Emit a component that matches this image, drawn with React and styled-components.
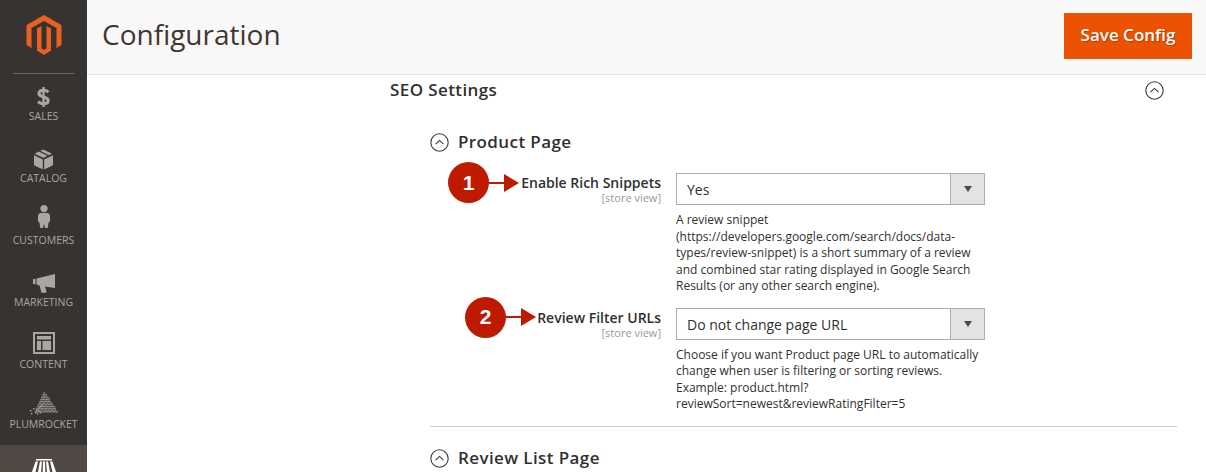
import React from "react";
import styled, { createGlobalStyle } from "styled-components";

const GlobalStyle = createGlobalStyle`
  html, body {
    margin: 0;
    padding: 0;
    background: #fff;
    font-family: "Open Sans", "Liberation Sans", sans-serif;
  }
`;

const Page = styled.div`
  display: flex;
  width: 1206px;
  height: 472px;
  overflow: hidden;
`;

const Sidebar = styled.nav`
  flex: 0 0 87px;
  background: #373330;
  display: flex;
  flex-direction: column;
`;

const LogoBox = styled.div`
  flex: none;
  height: 74px;
  margin: 0 13px 1px;
  padding-top: 15px;
  box-sizing: border-box;
  border-bottom: 1px solid #6d6762;
  display: flex;
  justify-content: center;
  align-items: flex-start;
`;

const NavItem = styled.a`
  flex: 0 0 ${(p) => p.$height}px;
  box-sizing: border-box;
  padding-top: ${(p) => (p.$active ? 14 : 10)}px;
  display: flex;
  flex-direction: column;
  align-items: center;
  color: ${(p) => (p.$active ? "#fff" : "#aaa6a0")};
  background: ${(p) => (p.$active ? "#514943" : "transparent")};
  font-size: 10.5px;
  line-height: 14px;
  text-transform: uppercase;
`;

const NavIcon = styled.span`
  height: ${(p) => (p.$short ? 22 : 24)}px;
  display: flex;
  align-items: ${(p) => (p.$active ? "flex-start" : "center")};
  justify-content: center;
  transform: translateY(${(p) => p.$lift || 0}px);
`;

const Main = styled.main`
  flex: 1;
  display: flex;
  flex-direction: column;
  min-width: 0;
`;

const Header = styled.header`
  height: 75px;
  flex: none;
  box-sizing: border-box;
  background: #f8f8f8;
  border-bottom: 1px solid #e3e3e3;
  display: flex;
  align-items: flex-start;
  justify-content: space-between;
  padding: 13px 14px 0 15px;
`;

const Title = styled.h1`
  margin: -1px 0 0;
  font-size: 28px;
  line-height: 44px;
  font-weight: 400;
  color: #41362f;
`;

const SaveButton = styled.button`
  width: 128px;
  height: 46px;
  border: 0;
  background: #eb5202;
  color: #fff;
  font-family: inherit;
  font-size: 17px;
  font-weight: 600;
  padding: 0 0 4px;
  text-shadow: 1px 1px 1px rgba(0, 0, 0, 0.25);
`;

const Content = styled.div`
  padding: 0 29px 0 303px;
`;

const SectionHead = styled.div`
  height: 30px;
  display: flex;
  align-items: center;
  justify-content: space-between;
  padding-right: 13px;
`;

const SectionTitle = styled.h2`
  margin: -2px 0 0;
  font-size: 17px;
  font-weight: 600;
  letter-spacing: 0.4px;
  color: #303030;
`;

const Group = styled.section`
  margin-left: 40px;
`;

const GroupHead = styled.div`
  display: flex;
  align-items: center;
  gap: 9px;
  height: 26px;
  margin-top: ${(p) => p.$top}px;
`;

const GroupTitle = styled.h3`
  margin: -2px 0 0;
  font-size: 17px;
  font-weight: 600;
  letter-spacing: 0.4px;
  color: #303030;
`;

const Row = styled.div`
  display: grid;
  grid-template-columns: 231px 309px;
  column-gap: 15px;
  margin-top: ${(p) => p.$top}px;
`;

const LabelCell = styled.div`
  position: relative;
  text-align: right;
  padding-top: 1px;
`;

const Label = styled.div`
  font-size: 14px;
  line-height: 18px;
  font-weight: 600;
  color: #303030;
`;

const Scope = styled.div`
  font-size: 11px;
  line-height: 12px;
  color: #999;
`;

const Callout = styled.div`
  position: absolute;
  top: -11px;
  left: ${(p) => p.$left}px;
  display: flex;
  align-items: center;
`;

const Badge = styled.span`
  width: 41px;
  height: 41px;
  border-radius: 50%;
  background: #bd1a00;
  color: #fff;
  font-family: "Liberation Sans", sans-serif;
  font-size: 21px;
  font-weight: 700;
  display: flex;
  align-items: center;
  justify-content: center;
`;

const ArrowLine = styled.span`
  width: 15px;
  height: 2px;
  background: #bd1a00;
`;

const ArrowHead = styled.span`
  width: 0;
  height: 0;
  border-left: 15px solid #bd1a00;
  border-top: 9px solid transparent;
  border-bottom: 9px solid transparent;
`;

const Select = styled.div`
  height: 32px;
  box-sizing: border-box;
  border: 1px solid #adadad;
  display: flex;
  align-items: stretch;
`;

const SelectValue = styled.div`
  flex: 1;
  padding-left: 10px;
  font-size: 14px;
  line-height: 31px;
  color: #303030;
`;

const SelectArrow = styled.div`
  width: 33px;
  background: #e3e3e3;
  border-left: 1px solid #adadad;
  display: flex;
  align-items: center;
  justify-content: center;

  &::after {
    content: "";
    border-left: 4.5px solid transparent;
    border-right: 4.5px solid transparent;
    border-top: 6px solid #514943;
  }
`;

const Note = styled.div`
  margin-top: 7px;
  font-size: 12px;
  line-height: 16.5px;
  color: #303030;
`;

const Rule = styled.hr`
  margin: 13px 0 0;
  border: 0;
  border-top: 1px solid #cccccc;
`;

const CollapseIcon = () => (
  <svg width="19" height="19" viewBox="0 0 19 19" fill="none">
    <circle cx="9.5" cy="9.5" r="8.7" stroke="#41362f" strokeWidth="1.1" />
    <path d="M5.5 11.2 9.5 7.4l4 3.8" stroke="#41362f" strokeWidth="1.1" />
  </svg>
);

const Logo = () => (
  <svg width="36" height="41" viewBox="0 0 36 41" fill="#eb5f20">
    <path d="M18 0 35.5 10v20L30.500 33V13L18 6 5.500 13v20L.5 30V10Z" />
    <path d="M11 13.500 15.500 11v22.500L18 35l2.500-1.500V11L25 13.500V35.500L18 40 11 35.500Z" />
  </svg>
);

const DollarIcon = () => (
  <svg width="13" height="20" viewBox="0 0 14 22" fill="none" stroke="#aaa6a0">
    <path d="M7 0v22" strokeWidth="2.600" />
    <path d="M12.300 5.700C11 4.200 9 3.600 7 3.600c-3 0-5 1.300-5 3.500 0 5 10.200 2.700 10.200 7.800 0 2.300-2.200 3.500-5.200 3.500-2.300 0-4.500-.8-5.800-2.400" strokeWidth="3.400" />
  </svg>
);

const BoxIcon = () => (
  <svg width="19" height="21" viewBox="0 0 20 22" fill="#aaa6a0">
    <path d="M0 6.500 9.300 11v10.500L0 17Z" />
    <path d="M20 6.500 10.700 11v10.500L20 17Z" />
    <path d="M6.500 1.800 9.800.5 19 5l-3.300 1.600Z" />
    <path d="M5 2.500 14.200 7 10 9.300.8 5Z" />
  </svg>
);

const PersonIcon = () => (
  <svg width="12" height="24" viewBox="0 0 12 24" fill="#aaa6a0">
    <circle cx="6" cy="3.600" r="3.600" />
    <path d="M2 8h8l2 2v6.500l-1.500 1-.7 5.500H7l-1-4-1 4H2.200l-.7-5.500-1.500-1V10Z" />
  </svg>
);

const MegaphoneIcon = () => (
  <svg width="22" height="19" viewBox="0 0 22 19" fill="#aaa6a0">
    <path d="M0 5h2.500v5H0Z" />
    <path d="M3.500 4.500 22 0v14l-10-1.600 1.500 5.300-.7 1H8.500L6.500 11.500l-3-1Z" />
  </svg>
);

const LayoutIcon = () => (
  <svg width="22" height="22" viewBox="0 0 22 22" fill="#aaa6a0">
    <path fillRule="evenodd" d="M0 0h22v22H0ZM2 2v18h18V2Z" />
    <path d="M4 4h14v3.500H4ZM4 9h4v9H4ZM9.500 9H18v9H9.500Z" />
  </svg>
);

const scatter = [
  [0, 18], [3, 16], [1, 21], [5, 20], [7, 21], [6, 17], [9, 15], [8, 18], [10, 20], [11, 13],
];

const PyramidIcon = () => {
  // dotted pyramid: dense on the right, left side dissolves into loose squares
  const dots = [];
  for (let r = 0; r < 12; r++) {
    const right = r * 1.2 + 0.5;
    const left = r * 0.8 + 0.5;
    for (let x = -left; x <= right; x += 1.4) {
      dots.push(<rect key={`${r}-${x}`} x={14 + x} y={r * 1.75} width="1.1" height="1.2" />);
    }
  }
  return (
    <svg width="28" height="23" viewBox="0 0 28 23" fill="#aaa6a0">
      {dots}
      {scatter.map(([x, y]) => (
        <rect key={`${x}-${y}`} x={x} y={y} width="1.400" height="1.400" />
      ))}
    </svg>
  );
};

const StoreIcon = () => (
  <svg width="24" height="13" viewBox="0 0 24 13" fill="#fff">
    <path d="M4 0h16v1.500H4Z" />
    <path d="M3.500 2.500H6L3.500 13H0Z" />
    <path d="M8 2.500h2L9 13H6Z" />
    <path d="M11 2.500h2l.300 10.500h-2.600Z" />
    <path d="M14 2.500h2l2 10.500h-3Z" />
    <path d="M18 2.500h2.500L24 13h-3.500Z" />
  </svg>
);

const navItems = [
  { label: "Sales", icon: <DollarIcon />, height: 62 },
  { label: "Catalog", icon: <BoxIcon />, height: 62 },
  { label: "Customers", icon: <PersonIcon />, height: 62, lift: -4 },
  { label: "Marketing", icon: <MegaphoneIcon />, height: 62 },
  { label: "Content", icon: <LayoutIcon />, height: 62, lift: -2 },
  { label: "Plumrocket", icon: <PyramidIcon />, height: 60, short: true, lift: -3 },
];

export default function App() {
  return (
    <>
      <GlobalStyle />
      <Page>
        <Sidebar>
          <LogoBox>
            <Logo />
          </LogoBox>
          {navItems.map((item) => (
            <NavItem key={item.label} $height={item.height}>
              <NavIcon $short={item.short} $lift={item.lift}>
                {item.icon}
              </NavIcon>
              {item.label}
            </NavItem>
          ))}
          <NavItem $height={40} $active>
            <NavIcon $active>
              <StoreIcon />
            </NavIcon>
          </NavItem>
        </Sidebar>
        <Main>
          <Header>
            <Title>Configuration</Title>
            <SaveButton>Save Config</SaveButton>
          </Header>
          <Content>
            <SectionHead>
              <SectionTitle>SEO Settings</SectionTitle>
              <CollapseIcon />
            </SectionHead>
            <Group>
              <GroupHead $top={24}>
                <CollapseIcon />
                <GroupTitle>Product Page</GroupTitle>
              </GroupHead>
              <Row $top={18}>
                <LabelCell>
                  <Callout $left={18}>
                    <Badge>1</Badge>
                    <ArrowLine />
                    <ArrowHead />
                  </Callout>
                  <Label>Enable Rich Snippets</Label>
                  <Scope>[store view]</Scope>
                </LabelCell>
                <div>
                  <Select>
                    <SelectValue>Yes</SelectValue>
                    <SelectArrow />
                  </Select>
                  <Note>
                    A review snippet
                    <br />
                    (https://developers.google.com/search/docs/data-
                    <br />
                    types/review-snippet) is a short summary of a review
                    <br />
                    and combined star rating displayed in Google Search
                    <br />
                    Results (or any other search engine).
                  </Note>
                </div>
              </Row>
              <Row $top={13}>
                <LabelCell>
                  <Callout $left={35}>
                    <Badge>2</Badge>
                    <ArrowLine />
                    <ArrowHead />
                  </Callout>
                  <Label>Review Filter URLs</Label>
                  <Scope>[store view]</Scope>
                </LabelCell>
                <div>
                  <Select>
                    <SelectValue>Do not change page URL</SelectValue>
                    <SelectArrow />
                  </Select>
                  <Note>
                    Choose if you want Product page URL to automatically
                    <br />
                    change when user is filtering or sorting reviews.
                    <br />
                    Example: product.html?
                    <br />
                    reviewSort=newest&amp;reviewRatingFilter=5
                  </Note>
                </div>
              </Row>
              <Rule />
              <GroupHead $top={19}>
                <CollapseIcon />
                <GroupTitle>Review List Page</GroupTitle>
              </GroupHead>
            </Group>
          </Content>
        </Main>
      </Page>
    </>
  );
}
